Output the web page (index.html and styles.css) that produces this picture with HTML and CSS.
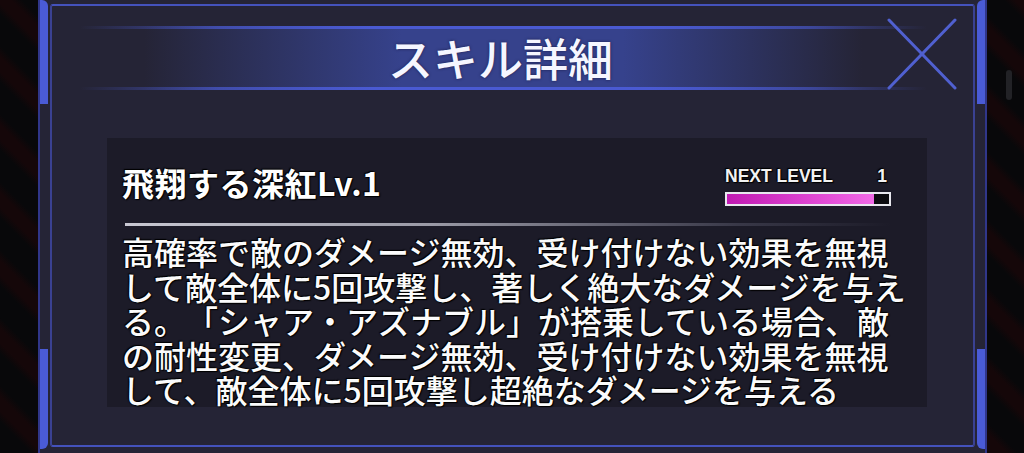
FILE: index.html
```html
<!DOCTYPE html>
<html lang="ja">
<head>
<meta charset="utf-8">
<title>スキル詳細</title>
<link rel="stylesheet" href="styles.css">
</head>
<body>
<div class="screen">
  <div class="frame">
    <div class="frame-line"></div>
    <span class="acc acc-tl"></span>
    <span class="acc acc-tr"></span>
    <span class="acc acc-bl"></span>
    <span class="acc acc-br"></span>

    <div class="titlebar">
      <h1 class="title">スキル詳細</h1>
    </div>
    <button class="close" aria-label="閉じる">
      <svg viewBox="0 0 70 72" width="70" height="72">
        <line x1="2" y1="2" x2="68" y2="70" stroke="#5060d0" stroke-width="3" stroke-linecap="round"/>
        <line x1="68" y1="2" x2="2" y2="70" stroke="#5060d0" stroke-width="3" stroke-linecap="round"/>
      </svg>
    </button>

    <section class="skill">
      <div class="skill-head">
        <div class="skill-name">飛翔する深紅Lv.1</div>
        <div class="next">
          <div class="next-row"><span>NEXT LEVEL</span><span>1</span></div>
          <div class="bar"><div class="bar-fill" style="width: 91%"></div></div>
        </div>
      </div>
      <div class="divider"></div>
      <div class="desc">
        <div class="line">高確率で敵のダメージ無効、受け付けない効果を無視</div>
        <div class="line">して敵全体に5回攻撃し、著しく絶大なダメージを与え</div>
        <div class="line">る。「シャア・アズナブル」が搭乗している場合、敵</div>
        <div class="line">の耐性変更、ダメージ無効、受け付けない効果を無視</div>
        <div class="line">して、敵全体に5回攻撃し超絶なダメージを与える</div>
      </div>
    </section>
  </div>
  <span class="scroll-pill"></span>
</div>
</body>
</html>
```

FILE: styles.css
```css
html, body {
  margin: 0;
  padding: 0;
}
body {
  width: 1024px;
  height: 453px;
  overflow: hidden;
  background: #08080a;
  font-family: "Noto Sans CJK JP", "Noto Sans", sans-serif;
}
.screen {
  position: relative;
  width: 1024px;
  height: 453px;
  background:
    repeating-linear-gradient(45deg, #08080a 0px, #08080a 22px, #150709 30px, #150709 40px, #08080a 48px);
}
.frame {
  position: relative;
  margin-left: 38px;
  width: 949px;
  height: 453px;
  box-sizing: border-box;
  background: #252436;
  border-left: 2px solid #30368a;
  border-right: 2px solid #30368a;
  padding-top: 26px;
}
.frame-line {
  position: absolute;
  left: 10px;
  right: 10px;
  top: 4px;
  bottom: 6px;
  border: 2px solid #3a4192;
  border-top-color: #4452bc;
  border-bottom-color: #4452bc;
  border-radius: 3px;
  pointer-events: none;
}
.acc {
  position: absolute;
  width: 8px;
  height: 104px;
  background: #4a5bd6;
}
.acc-tl { left: 0; top: 0; border-top-right-radius: 6px; }
.acc-tr { right: 0; top: 0; border-top-left-radius: 6px; }
.acc-bl { left: 0; bottom: 4px; height: 100px; border-bottom-right-radius: 6px; }
.acc-br { right: 0; bottom: 4px; height: 100px; border-bottom-left-radius: 6px; }

.titlebar {
  margin: 0 12px;
  padding-right: 24px;
  height: 64px;
  display: flex;
  align-items: center;
  justify-content: center;
  background:
    linear-gradient(90deg, rgba(74,90,210,0) 3%, rgba(74,90,210,.7) 18%, #4a5ad2 35%, #4a5ad2 65%, rgba(74,90,210,.6) 82%, rgba(74,90,210,0) 95%) top / 100% 3px no-repeat,
    linear-gradient(90deg, rgba(74,90,210,0) 3%, rgba(74,90,210,.7) 18%, #4a5ad2 35%, #4a5ad2 65%, rgba(74,90,210,.6) 82%, rgba(74,90,210,0) 95%) bottom / 100% 3px no-repeat,
    linear-gradient(90deg, rgba(54,65,138,0) 10%, #36428c 38%, #36428c 62%, rgba(54,65,138,0) 88%);
}
.title {
  margin: 0;
  font-size: 45px;
  font-weight: 500;
  line-height: 50px;
  color: #f5f6ff;
  text-shadow: 0 0 3px rgba(20,20,60,.8);
}
.close {
  position: absolute;
  left: 847px;
  top: 18px;
  width: 70px;
  height: 72px;
  padding: 0;
  border: 0;
  background: none;
}
.close svg { display: block; }

.skill {
  margin: 48px 0 0 67px;
  width: 820px;
  height: 269px;
  box-sizing: border-box;
  background: #1c1b28;
  padding: 26px 36px 0 15px;
  color: #fff;
}
.skill-head {
  display: flex;
  justify-content: space-between;
  align-items: flex-start;
}
.skill-name {
  font-size: 32px;
  font-weight: 700;
  line-height: 36px;
  letter-spacing: 0.5px;
  text-shadow: 0 0 2px #000, 1px 1px 1px #000, -1px -1px 1px #000;
}
.next {
  width: 166px;
  padding-top: 2px;
}
.next-row {
  display: flex;
  justify-content: space-between;
  padding-right: 4px;
  font-family: "Liberation Sans", Arial, sans-serif;
  font-size: 17.5px;
  font-weight: 700;
  line-height: 20px;
  color: #f2f2f2;
  text-shadow: 0 0 2px #000, 1px 1px 1px #000, -1px -1px 1px #000;
}
.bar {
  margin-top: 6px;
  height: 14px;
  box-sizing: border-box;
  border: 2px solid #e8e8ee;
  background: #0c0c10;
  display: flex;
}
.bar-fill {
  height: 100%;
  background: linear-gradient(90deg, #c01ab2, #e44fd8 70%, #f06ae6);
}
.divider {
  margin: 17px 0 0 3px;
  height: 3px;
  background: linear-gradient(90deg, #c8c8d2 0%, #9a9aa6 40%, rgba(100,100,120,.4) 80%, rgba(80,80,100,0) 100%);
}
.desc {
  margin-top: 8px;
  font-size: 32px;
  font-weight: 500;
  color: #fbfbfb;
  text-spacing-trim: space-all;
  text-shadow: 0 0 2px #000, 1px 1px 1px #000, -1px -1px 1px #000;
}
.line {
  height: 34.5px;
  line-height: 34.5px;
  white-space: nowrap;
}
.scroll-pill {
  position: absolute;
  left: 1006px;
  top: 70px;
  width: 6px;
  height: 30px;
  border-radius: 3px;
  background: #222226;
}
```
